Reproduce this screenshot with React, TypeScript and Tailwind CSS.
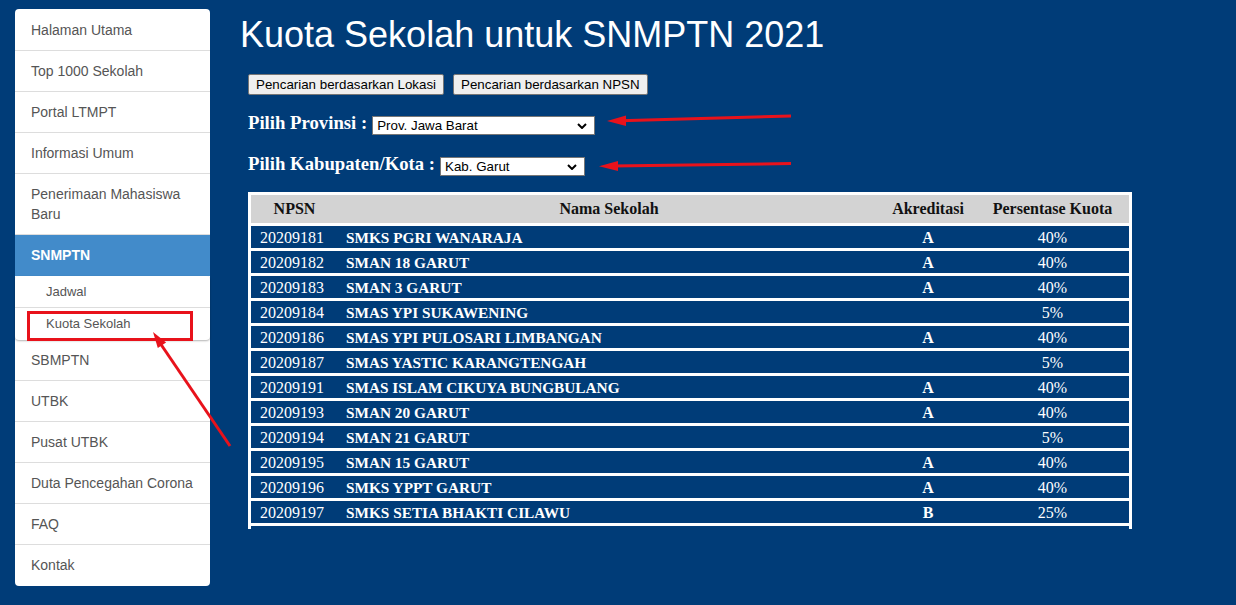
import React from 'react';

const menuTop = ['Halaman Utama', 'Top 1000 Sekolah', 'Portal LTMPT', 'Informasi Umum'];
const menuBottom = ['SBMPTN', 'UTBK', 'Pusat UTBK', 'Duta Pencegahan Corona', 'FAQ', 'Kontak'];

const rows = [
  ['20209181', 'SMKS PGRI WANARAJA', 'A', '40%'],
  ['20209182', 'SMAN 18 GARUT', 'A', '40%'],
  ['20209183', 'SMAN 3 GARUT', 'A', '40%'],
  ['20209184', 'SMAS YPI SUKAWENING', '', '5%'],
  ['20209186', 'SMAS YPI PULOSARI LIMBANGAN', 'A', '40%'],
  ['20209187', 'SMAS YASTIC KARANGTENGAH', '', '5%'],
  ['20209191', 'SMAS ISLAM CIKUYA BUNGBULANG', 'A', '40%'],
  ['20209193', 'SMAN 20 GARUT', 'A', '40%'],
  ['20209194', 'SMAN 21 GARUT', '', '5%'],
  ['20209195', 'SMAN 15 GARUT', 'A', '40%'],
  ['20209196', 'SMKS YPPT GARUT', 'A', '40%'],
  ['20209197', 'SMKS SETIA BHAKTI CILAWU', 'B', '25%'],
];

function FakeSelect({ value, width }: { value: string; width: string }) {
  return (
    <div className={`${width} h-[19px] flex items-center justify-between border border-[#767676] bg-white pl-[4px] pr-[7px] text-[13.33px] text-black font-['Liberation_Sans',Arial,sans-serif]`}>
      <span className="leading-none">{value}</span>
      <svg width="10" height="6" viewBox="0 0 10 6">
        <path d="M1 1 L5 5 L9 1" fill="none" stroke="#000" strokeWidth="2" />
      </svg>
    </div>
  );
}

export default function App() {
  return (
    <div className="relative min-h-screen bg-[#003c78] font-['Liberation_Sans',Arial,sans-serif]">
      <div className="flex items-start">
        {/* Sidebar */}
        <aside className="ml-[15px] mt-[9px] w-[195px] rounded-[4px] bg-white py-[1px] text-[14px] text-[#555]">
          {menuTop.map((m) => (
            <div key={m} className="border-b border-[#ddd] px-[16px] py-[10px] leading-[20px]">{m}</div>
          ))}
          <div className="border-b border-[#ddd] px-[16px] py-[10px] leading-[20px]">
            Penerimaan Mahasiswa<br />Baru
          </div>
          <div className="bg-[#428bca] px-[16px] py-[10px] font-bold leading-[21px] text-white">SNMPTN</div>
          <div className="relative z-10 rounded-[4px] bg-white text-[13px] shadow-[0_1px_2px_rgba(0,0,0,0.3)]">
            <div className="flex h-[32px] items-center border-b border-[#ddd] pl-[31px]">Jadwal</div>
            <div className="flex h-[32px] items-center pl-[31px]">Kuota Sekolah</div>
          </div>
          {menuBottom.map((m, i) => (
            <div
              key={m}
              className={`px-[16px] py-[10px] leading-[20px] ${i < menuBottom.length - 1 ? 'border-b border-[#ddd]' : ''}`}
            >
              {m}
            </div>
          ))}
        </aside>

        {/* Main */}
        <main className="ml-[30px] pt-[15px]">
          <h1 className="text-[36px] leading-[40px] text-white">Kuota Sekolah untuk SNMPTN 2021</h1>
          <div className="ml-[8px]">
            <div className="mt-[19px] flex gap-[9px]">
              <button className="h-[21px] rounded-[2px] border border-[#767676] bg-[#efefef] px-[7px] text-[13.33px] text-black">
                Pencarian berdasarkan Lokasi
              </button>
              <button className="h-[21px] rounded-[2px] border border-[#767676] bg-[#efefef] px-[7px] text-[13.33px] text-black">
                Pencarian berdasarkan NPSN
              </button>
            </div>

            <div className="mt-[21px] flex items-start">
              <span className="font-['Liberation_Serif','Times_New_Roman',serif] text-[18.72px] font-bold leading-[13px] text-white">
                Pilih Provinsi :
              </span>
              <div className="ml-[5px]">
                <FakeSelect value="Prov. Jawa Barat" width="w-[223px]" />
              </div>
            </div>

            <div className="mt-[22px] flex items-start">
              <span className="font-['Liberation_Serif','Times_New_Roman',serif] text-[18.72px] font-bold leading-[13px] text-white">
                Pilih Kabupaten/Kota :
              </span>
              <div className="ml-[5px]">
                <FakeSelect value="Kab. Garut" width="w-[145px]" />
              </div>
            </div>

            {/* Table */}
            <div className="mt-[16px] w-[884px] border-x-[3px] border-t-[3px] border-white pb-[3px] font-['Liberation_Serif','Times_New_Roman',serif]">
              <div className="grid h-[31px] grid-cols-[87px_542px_96px_153px] items-center border-b-[3px] border-white bg-[#d3d3d3] text-center text-[16px] font-bold text-[#111]">
                <div>NPSN</div>
                <div>Nama Sekolah</div>
                <div>Akreditasi</div>
                <div>Persentase Kuota</div>
              </div>
              {rows.map((r) => (
                <div
                  key={r[0]}
                  className="grid h-[25px] grid-cols-[87px_542px_96px_153px] items-center border-b-[3px] border-white text-white"
                >
                  <div className="pl-[9px] text-[16px]">{r[0]}</div>
                  <div className="pl-[8px] text-[15.3px] font-bold">{r[1]}</div>
                  <div className="text-center text-[16px] font-bold">{r[2]}</div>
                  <div className="text-center text-[16px]">{r[3]}</div>
                </div>
              ))}
            </div>
          </div>
        </main>
      </div>

      {/* Annotations */}
      <svg className="pointer-events-none absolute left-0 top-0 z-20" width="1236" height="605">
        <rect x="28.5" y="312.5" width="163" height="27" fill="none" stroke="#e8121b" strokeWidth="3" />
        <line x1="230" y1="446" x2="160" y2="343" stroke="#e8121b" strokeWidth="3" />
        <polygon points="153,332 166.1,342.5 157.8,348.1" fill="#e8121b" />
        <line x1="791" y1="116" x2="620" y2="120.7" stroke="#e8121b" strokeWidth="3" />
        <polygon points="607,121 626,126 626,115.5" fill="#e8121b" />
        <line x1="791" y1="163.5" x2="612" y2="166" stroke="#e8121b" strokeWidth="3" />
        <polygon points="599,166.2 618,171 618,161" fill="#e8121b" />
      </svg>
    </div>
  );
}
